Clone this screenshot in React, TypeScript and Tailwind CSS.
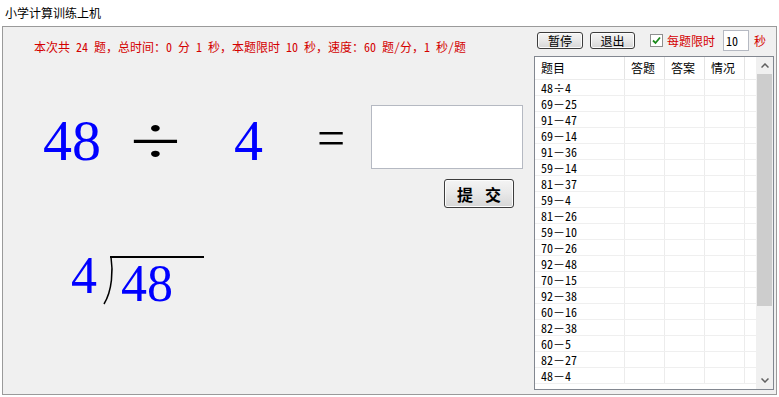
import React from "react";

const rows = [
  "48÷4",
  "69－25",
  "91－47",
  "69－14",
  "91－36",
  "59－14",
  "81－37",
  "59－4",
  "81－26",
  "59－10",
  "70－26",
  "92－48",
  "70－15",
  "92－38",
  "60－16",
  "82－38",
  "60－5",
  "82－27",
  "48－4",
];

const cjk = "font-['Noto_Sans_Mono_CJK_SC','Noto_Sans_CJK_SC',sans-serif]";
const serif = "font-['Liberation_Serif','Times_New_Roman',serif]";

function WinButton({ children, className }: { children: React.ReactNode; className: string }) {
  return (
    <div
      className={`flex items-center justify-center rounded-[3px] border border-[#3c3c3c] bg-gradient-to-b from-[#f4f4f4] via-[#e8e8e8] to-[#d6d6d6] shadow-[inset_0_0_0_1px_#fcfcfc] ${className}`}
    >
      {children}
    </div>
  );
}

export default function App() {
  return (
    <div className={`w-[779px] h-[397px] bg-white overflow-hidden ${cjk}`}>
      {/* title */}
      <div className="h-[26px] flex items-center pl-[5px] text-[12px] text-black leading-none">
        小学计算训练上机
      </div>
      {/* body */}
      <div className="ml-[2px] w-[775px] h-[369px] border border-[#9a9a9a] bg-[#f0f0f0] flex">
        {/* left */}
        <div className="w-[531px] flex flex-col">
          <div className="mt-[13px] ml-[31px] h-[14px] leading-[14px] text-[12px] text-[#d40000] whitespace-nowrap">
            本次共 24 题，总时间：0 分 1 秒，本题限时 10 秒，速度：60 题/分，1 秒/题
          </div>
          {/* expression */}
          <div className="mt-[51px] h-[64px] flex items-start">
            <div className={`ml-[40px] w-[87px] mt-[7px] text-[58px] leading-[58px] text-[#0000ff] ${serif}`}>48</div>
            <div className="w-[104px] -mt-[4px] h-[70px]">
              <div className={`origin-[left_center] scale-x-[1.16] scale-y-[0.84] text-[80px] leading-[80px] text-black ${serif}`}>÷</div>
            </div>
            <div className={`w-[83px] mt-[7px] text-[58px] leading-[58px] text-[#0000ff] ${serif}`}>4</div>
            <div className={`w-[54px] mt-[8px] text-[50px] leading-[50px] text-black ${serif}`}>=</div>
            <div className="w-[152px] h-[64px] bg-white border border-[#b5b9c2]" />
          </div>
          {/* submit */}
          <div className="mt-[10px] flex">
            <WinButton className="ml-[441px] w-[70px] h-[29px] gap-[12px]">
              <span className="text-[16px] font-bold leading-none text-black">提</span>
              <span className="text-[16px] font-bold leading-none text-black">交</span>
            </WinButton>
          </div>
          {/* long division */}
          <div className="mt-[42px] flex items-start">
            <div className={`ml-[68px] w-[30px] text-[52px] leading-[52px] text-[#0000ff] ${serif}`}>4</div>
            <div className="relative w-[103px] h-[50px]">
              <svg className="absolute left-0 top-[6px]" width="103" height="50" viewBox="0 0 103 50">
                <path d="M9 1 L103 1" stroke="#000" strokeWidth="2" fill="none" />
                <path d="M10 1 C 12 14, 11.5 34, 3 48" stroke="#000" strokeWidth="1.5" fill="none" />
              </svg>
              <div className={`pl-[20px] pt-[8px] text-[52px] leading-[52px] text-[#0000ff] ${serif}`}>48</div>
            </div>
          </div>
        </div>
        {/* right */}
        <div className="flex flex-col">
          <div className="mt-[3px] h-[21px] flex items-center">
            <WinButton className="ml-[3px] w-[46px] h-[17px]">
              <span className="text-[12px] leading-none">暂停</span>
            </WinButton>
            <WinButton className="ml-[7px] w-[45px] h-[17px]">
              <span className="text-[12px] leading-none">退出</span>
            </WinButton>
            <div className="ml-[15px] w-[13px] h-[13px] border border-[#8e8f8f] bg-white flex items-center justify-center">
              <svg width="9" height="9" viewBox="0 0 9 9">
                <path d="M1 4.5 L3.5 7 L8 1.5" stroke="#1c8a1c" strokeWidth="1.8" fill="none" />
              </svg>
            </div>
            <div className="ml-[4px] text-[12px] leading-none text-[#d40000]">每题限时</div>
            <div className="ml-[8px] w-[26px] h-[21px] bg-white border border-[#b5b9c2] flex items-center pl-[2px] text-[12px] leading-none">
              10
            </div>
            <div className="ml-[5px] text-[12px] leading-none text-[#d40000]">秒</div>
          </div>
          {/* table */}
          <div className="mt-[5px] w-[240px] h-[334px] border border-[#828790] bg-white flex">
            <div className="w-[221px] flex flex-col">
              <div className="h-[23px] flex text-[12px] border-b border-[#ececec]">
                <div className="w-[90px] pl-[6px] flex items-center border-r border-[#e4e4e4]">题目</div>
                <div className="w-[40px] pl-[6px] flex items-center border-r border-[#e4e4e4]">答题</div>
                <div className="w-[40px] pl-[6px] flex items-center border-r border-[#e4e4e4]">答案</div>
                <div className="w-[40px] pl-[6px] flex items-center border-r border-[#e4e4e4]">情况</div>
                <div className="flex-1" />
              </div>
              {rows.map((r, i) => (
                <div key={i} className="h-[16px] flex text-[12px] leading-none border-b border-[#efefef]">
                  <div className="w-[90px] pl-[6px] flex items-center border-r border-[#ececec] whitespace-nowrap">{r}</div>
                  <div className="w-[40px] border-r border-[#ececec]" />
                  <div className="w-[40px] border-r border-[#ececec]" />
                  <div className="w-[40px] border-r border-[#ececec]" />
                  <div className="flex-1" />
                </div>
              ))}
            </div>
            {/* scrollbar */}
            <div className="w-[17px] bg-[#f0f0f0] flex flex-col">
              <div className="h-[17px] flex items-center justify-center">
                <svg width="8" height="5" viewBox="0 0 8 5">
                  <path d="M0.5 4.5 L4 1 L7.5 4.5" stroke="#606060" strokeWidth="1.5" fill="none" />
                </svg>
              </div>
              <div className="ml-[1px] w-[15px] h-[232px] bg-[#cdcdcd]" />
              <div className="flex-1" />
              <div className="h-[17px] flex items-center justify-center">
                <svg width="8" height="5" viewBox="0 0 8 5">
                  <path d="M0.5 0.5 L4 4 L7.5 0.5" stroke="#606060" strokeWidth="1.5" fill="none" />
                </svg>
              </div>
            </div>
          </div>
        </div>
      </div>
    </div>
  );
}
